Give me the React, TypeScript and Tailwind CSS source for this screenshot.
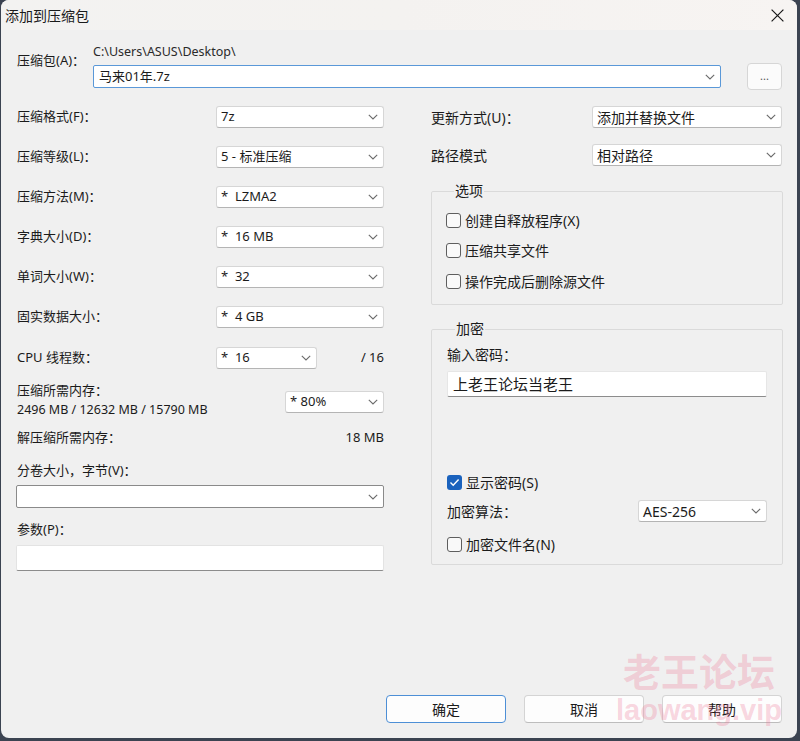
import type { ReactNode } from 'react';

const font = { fontFamily: '"Noto Sans", "Noto Sans CJK SC", sans-serif' };

function Chevron() {
  return (
    <svg width="10" height="6" viewBox="0 0 10 6" className="shrink-0 mr-[5px]">
      <path d="M0.8 0.8 L5 5 L9.2 0.8" fill="none" stroke="#6b6b6b" strokeWidth="1.1" />
    </svg>
  );
}

function Select({ value, className = '' }: { value: string; className?: string }) {
  return (
    <div
      className={`h-[22px] flex items-center justify-between bg-white border border-[#d6d6d6] border-b-[#b4b4b4] rounded-[3px] pl-[4px] text-[13px] text-[#1b1b1b] whitespace-pre ${className}`}
    >
      <span>{value}</span>
      <Chevron />
    </div>
  );
}

function Check({ checked = false, children }: { checked?: boolean; children: ReactNode }) {
  return (
    <div className="h-[18px] flex items-center gap-[4px] text-[14px] text-[#1b1b1b]">
      {checked ? (
        <div className="w-[15px] h-[15px] rounded-[3px] bg-[#1a62bd] flex items-center justify-center">
          <svg width="11" height="9" viewBox="0 0 11 9">
            <path d="M1.5 4.6 L4.2 7.2 L9.6 1.6" fill="none" stroke="white" strokeWidth="1.4" />
          </svg>
        </div>
      ) : (
        <div className="w-[15px] h-[15px] rounded-[3px] border border-[#5e5e5e] bg-[#f9f9f9]" />
      )}
      <span>{children}</span>
    </div>
  );
}

function LeftRow({ label, value, mt = 'mt-[18px]' }: { label: string; value: string; mt?: string }) {
  return (
    <div className={`flex items-center h-[22px] ${mt}`}>
      <span className="w-[200px] pl-[1px] text-[13px]">{label}</span>
      <Select value={value} className="w-[168px]" />
    </div>
  );
}

function Button({ children, primary = false }: { children: ReactNode; primary?: boolean }) {
  return (
    <button
      className={`w-[120px] h-[28px] rounded-[4px] bg-[#fdfdfd] text-[14px] text-[#1b1b1b] border ${
        primary ? 'border-[#4d8fd6]' : 'border-[#d4d4d4] border-b-[#bdbdbd]'
      }`}
    >
      {children}
    </button>
  );
}

export default function App() {
  return (
    <div style={font} className="w-[800px] h-[741px] bg-[#3b4351] pl-[1px] pr-[3px] pb-[3px] overflow-hidden">
      <div className="relative h-full rounded-[8px] bg-[#f0f0f0] flex flex-col overflow-hidden text-[#1b1b1b]">
        {/* title bar */}
        <div className="h-[30px] shrink-0 flex items-center justify-between pl-[4px] pr-[13px] bg-gradient-to-r from-[#f3f2f1] via-[#f4f2f0] to-[#f7f4f2]">
          <span className="text-[14px]">添加到压缩包</span>
          <svg width="13" height="13" viewBox="0 0 13 13">
            <path d="M0.6 0.6 L12.4 12.4 M12.4 0.6 L0.6 12.4" stroke="#1b1b1b" strokeWidth="1.2" />
          </svg>
        </div>

        <div className="flex-1 flex flex-col pl-[15px] pr-[14px] pt-[14px]">
          {/* archive row */}
          <div className="flex">
            <span className="w-[77px] pl-[1px] pt-[7px] text-[13px] leading-[18px]">压缩包(A)：</span>
            <div className="flex flex-col">
              <span className="h-[16px] leading-[16px] text-[12.5px] text-[#2a2a2a]">C:\Users\ASUS\Desktop\</span>
              <div className="flex items-center mt-[3px] gap-[26px]">
                <div className="w-[628px] h-[23px] flex items-center justify-between bg-white border border-[#5a98d8] rounded-[2px] pl-[5px] text-[13px]">
                  <span>马来01年.7z</span>
                  <Chevron />
                </div>
                <div className="w-[35px] h-[27px] rounded-[4px] bg-[#fbfbfb] border border-[#d6d6d6] flex items-center justify-center text-[11px] text-[#555]">
                  ...
                </div>
              </div>
            </div>
          </div>

          {/* two columns */}
          <div className="flex mt-[16px] gap-[47px]">
            {/* left column */}
            <div className="w-[368px] flex flex-col">
              <LeftRow label="压缩格式(F)：" value="7z" mt="mt-0" />
              <LeftRow label="压缩等级(L)：" value="5 - 标准压缩" />
              <LeftRow label="压缩方法(M)：" value="*  LZMA2" />
              <LeftRow label="字典大小(D)：" value="*  16 MB" />
              <LeftRow label="单词大小(W)：" value="*  32" />
              <LeftRow label="固实数据大小：" value="*  4 GB" />
              <div className="flex items-center h-[22px] mt-[19px]">
                <span className="w-[200px] pl-[1px] text-[13px]">CPU 线程数：</span>
                <Select value="*  16" className="w-[101px]" />
                <span className="flex-1 text-right text-[13px]">/ 16</span>
              </div>
              <div className="flex items-start mt-[12px]">
                <div className="flex flex-col flex-1 pl-[1px] text-[13px] leading-[18px]">
                  <span>压缩所需内存：</span>
                  <span className="mt-[2px] text-[12.5px]">2496 MB / 12632 MB / 15790 MB</span>
                </div>
                <Select value="* 80%" className="w-[99px] mt-[10px]" />
              </div>
              <div className="flex justify-between mt-[9px] text-[13px] leading-[18px]">
                <span className="pl-[1px]">解压缩所需内存：</span>
                <span>18 MB</span>
              </div>
              <span className="mt-[15px] pl-[1px] text-[13px] leading-[18px]">分卷大小，字节(V)：</span>
              <div className="mt-[6px] h-[23px] flex items-center justify-end bg-white border border-[#8a8a8a] rounded-[2px]">
                <Chevron />
              </div>
              <span className="mt-[12px] pl-[1px] text-[13px] leading-[18px]">参数(P)：</span>
              <div className="mt-[7px] h-[26px] bg-white border border-[#e3e3e3] border-b-[#8c8c8c] rounded-[2px]" />
            </div>

            {/* right column */}
            <div className="w-[352px] flex flex-col">
              <div className="flex items-center h-[22px]">
                <span className="w-[161px] text-[14px]">更新方式(U)：</span>
                <Select value="添加并替换文件" className="w-[190px] text-[14px]" />
              </div>
              <div className="flex items-center h-[22px] mt-[16px]">
                <span className="w-[161px] text-[14px]">路径模式</span>
                <Select value="相对路径" className="w-[190px] text-[14px]" />
              </div>

              <fieldset className="mt-[16px] border border-[#dadada] rounded-[2px] pl-[14px] pt-[11px] pb-[14px] flex flex-col gap-[12.5px]">
                <legend className="ml-[8px] px-[1px] text-[14px] leading-[18px]">选项</legend>
                <Check>创建自释放程序(X)</Check>
                <Check>压缩共享文件</Check>
                <Check>操作完成后删除源文件</Check>
              </fieldset>

              <fieldset className="mt-[15px] border border-[#dadada] rounded-[2px] pl-[15px] pr-[15px] pt-[8px] pb-[11px] flex flex-col">
                <legend className="ml-[8px] px-[1px] text-[14px] leading-[18px]">加密</legend>
                <span className="text-[14px] leading-[18px]">输入密码：</span>
                <div className="mt-[7px] h-[26px] bg-white border border-[#e6e6e6] border-b-[#8c8c8c] rounded-[2px] pl-[5px] flex items-center text-[15px]">
                  上老王论坛当老王
                </div>
                <div className="mt-[76px]">
                  <Check checked>显示密码(S)</Check>
                </div>
                <div className="flex items-center h-[22px] mt-[9px]">
                  <span className="w-[191px] text-[14px]">加密算法：</span>
                  <Select value="AES-256" className="w-[129px] text-[14px]" />
                </div>
                <div className="mt-[13px]">
                  <Check>加密文件名(N)</Check>
                </div>
              </fieldset>
            </div>
          </div>

          {/* buttons */}
          <div className="mt-auto mb-[15px] flex justify-end gap-[18px] pr-[1px]">
            <Button primary>确定</Button>
            <Button>取消</Button>
            <Button>帮助</Button>
          </div>
        </div>

        {/* watermark */}
        <div className="absolute z-10 left-[618px] top-[652px] w-[160px] flex flex-col items-center pointer-events-none text-[rgba(238,120,150,0.3)] font-bold leading-none">
          <span className="text-[38px]">老王论坛</span>
          <span className="text-[29px] mt-[6px]" style={{ fontFamily: '"Liberation Sans", sans-serif' }}>
            laowang.vip
          </span>
        </div>
      </div>
    </div>
  );
}
